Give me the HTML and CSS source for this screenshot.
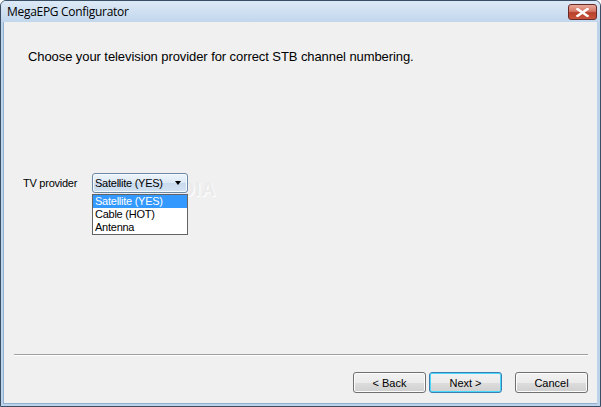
FILE: index.html
```html
<!DOCTYPE html>
<html>
<head>
<meta charset="utf-8">
<link rel="stylesheet" href="styles.css">
</head>
<body>
<div class="window">
  <div class="titlebar">
    <span class="title">MegaEPG Configurator</span>
    <div class="close">
      <svg width="13" height="9" viewBox="0 0 13 9"><path d="M1.5 1 L11.5 8 M11.5 1 L1.5 8" stroke="#fff" stroke-width="2.4" stroke-linecap="square"/></svg>
    </div>
  </div>
  <div class="client">
    <p class="heading">Choose your television provider for correct STB channel numbering.</p>
    <div class="row">
      <span class="label">TV provider</span>
      <div class="combo">
        <span class="combo-text">Satellite (YES)</span>
        <span class="arrow"></span>
        <ul class="dropdown">
          <li class="sel">Satellite (YES)</li>
          <li>Cable (HOT)</li>
          <li>Antenna</li>
        </ul>
      </div>
      <span class="wm-big">SOFTPEDIA</span>
    </div>
    <div class="spacer"></div>
    <div class="separator"></div>
    <div class="buttons">
      <button class="btn">&lt; Back</button>
      <button class="btn default">Next &gt;</button>
      <button class="btn cancel">Cancel</button>
    </div>
  </div>
</div>
</body>
</html>
```
FILE: styles.css
```css
html, body {
  margin: 0;
  padding: 0;
  background: #ffffff;
}
.window {
  width: 601px;
  height: 407px;
  box-sizing: border-box;
  border: 1px solid #3a4f66;
  border-radius: 6px 6px 0 0;
  background: #bcd3ea;
  display: flex;
  flex-direction: column;
  overflow: hidden;
}
.titlebar {
  height: 21px;
  flex: none;
  background: linear-gradient(#dde9f6, #c2d7ed);
  display: flex;
  align-items: center;
  position: relative;
  padding-left: 6px;
}
.title {
  font-family: "Open Sans", "Noto Sans", sans-serif;
  font-size: 12px;
  color: #000;
  letter-spacing: -0.3px;
}
.close {
  position: absolute;
  right: 3px;
  top: 3px;
  width: 27px;
  height: 14px;
  border: 1px solid #6b2a2a;
  border-radius: 3px;
  background: linear-gradient(#e9a99a 0%, #d47766 45%, #b8402c 55%, #c9553d 100%);
  display: flex;
  align-items: center;
  justify-content: center;
}
.close svg { display: block; }
.client {
  flex: 1;
  margin: 0 3px 2px 2px;
  background: #f0f0f0;
  border-left: 1px solid #8fb0d0;
  border-bottom: 1px solid #8fb0d0;
  display: flex;
  flex-direction: column;
  position: relative;
}
.heading {
  margin: 27px 0 0 24px;
  font-family: "Liberation Sans", Arial, sans-serif;
  font-size: 13px;
  line-height: 15px;
  letter-spacing: -0.08px;
  color: #000;
}
.row {
  margin-top: 109px;
  margin-left: 19px;
  display: flex;
  align-items: center;
  height: 20px;
  position: relative;
}
.label {
  font-family: "Liberation Sans", Arial, sans-serif;
  font-size: 11px;
  letter-spacing: -0.25px;
  color: #000;
  width: 69px;
}
.combo {
  position: relative;
  z-index: 1;
  width: 94px;
  height: 18px;
  border: 1px solid #6c8aa8;
  border-radius: 3px;
  background: linear-gradient(#eef5fc 0%, #dbe8f5 50%, #c8daed 51%, #d3e3f3 100%);
  display: flex;
  align-items: center;
  box-shadow: inset 0 0 0 1px #f4f9fd;
}
.combo-text {
  font-family: "Liberation Sans", Arial, sans-serif;
  font-size: 11px;
  letter-spacing: -0.25px;
  color: #000;
  padding-left: 2px;
  flex: 1;
}
.arrow {
  width: 0;
  height: 0;
  border-left: 3.5px solid transparent;
  border-right: 3.5px solid transparent;
  border-top: 4px solid #000;
  margin-right: 6px;
}
.dropdown {
  position: absolute;
  left: -1px;
  top: 20px;
  width: 94px;
  margin: 0;
  padding: 0;
  list-style: none;
  background: #fff;
  border: 1px solid #646464;
  z-index: 2;
}
.dropdown li {
  height: 13px;
  line-height: 13px;
  font-family: "Liberation Sans", Arial, sans-serif;
  font-size: 11px;
  letter-spacing: -0.25px;
  color: #000;
  padding-left: 2px;
}
.dropdown li.sel {
  background: #3399ff;
  color: #fff;
}
.wm-big {
  position: absolute;
  left: 74px;
  top: 5px;
  font-family: "Liberation Sans", Arial, sans-serif;
  font-weight: bold;
  font-size: 20px;
  letter-spacing: 0.5px;
  color: #ebebeb;
  text-shadow: 1px 1px 0 #ffffff;
  z-index: 0;
}
.spacer { flex: 1; }
.separator {
  height: 1px;
  margin: 0 9px 0 10px;
  background: #a0a0a0;
  border-bottom: 1px solid #ffffff;
}
.buttons {
  display: flex;
  justify-content: flex-end;
  margin: 16px 9px 10px 0;
}
.btn {
  width: 73px;
  height: 21px;
  box-sizing: border-box;
  margin: 0 0 0 3px;
  padding: 0;
  border: 1px solid #707070;
  border-radius: 3px;
  background: linear-gradient(#f2f2f2 0%, #ebebeb 50%, #dddddd 51%, #cfcfcf 100%);
  box-shadow: inset 0 0 0 1px #fcfcfc;
  font-family: "Liberation Sans", Arial, sans-serif;
  font-size: 11px;
  color: #000;
}
.btn.default {
  border-color: #3c7fb1;
  box-shadow: inset 0 0 0 1px #48d8fb;
}
.btn.cancel {
  margin-left: 13px;
}
```
